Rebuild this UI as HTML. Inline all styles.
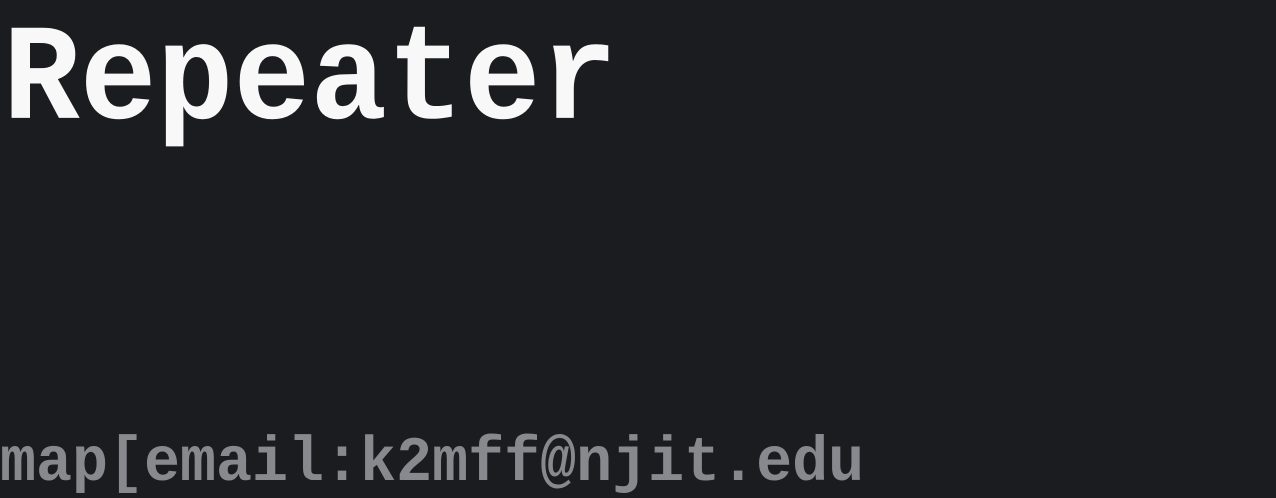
<!DOCTYPE html>
<html><head><style>
html,body{margin:0;padding:0;background:#1b1c20;width:1276px;height:498px;overflow:hidden;position:relative}
.t{position:absolute;font-family:"Liberation Mono",monospace;font-weight:bold;line-height:1;white-space:nowrap;margin:0}
#h{left:3px;top:21px;font-size:128px;color:#f8f8f8;transform:scaleY(1.07);transform-origin:0 98px}
#m{left:0;top:435px;font-size:60px;color:#88898e;transform:scaleY(1.05);transform-origin:0 46px}
</style></head><body>
<h1 class="t" id="h">Repeater</h1>
<div class="t" id="m">map[email:k2mff@njit.edu</div>
</body></html>
